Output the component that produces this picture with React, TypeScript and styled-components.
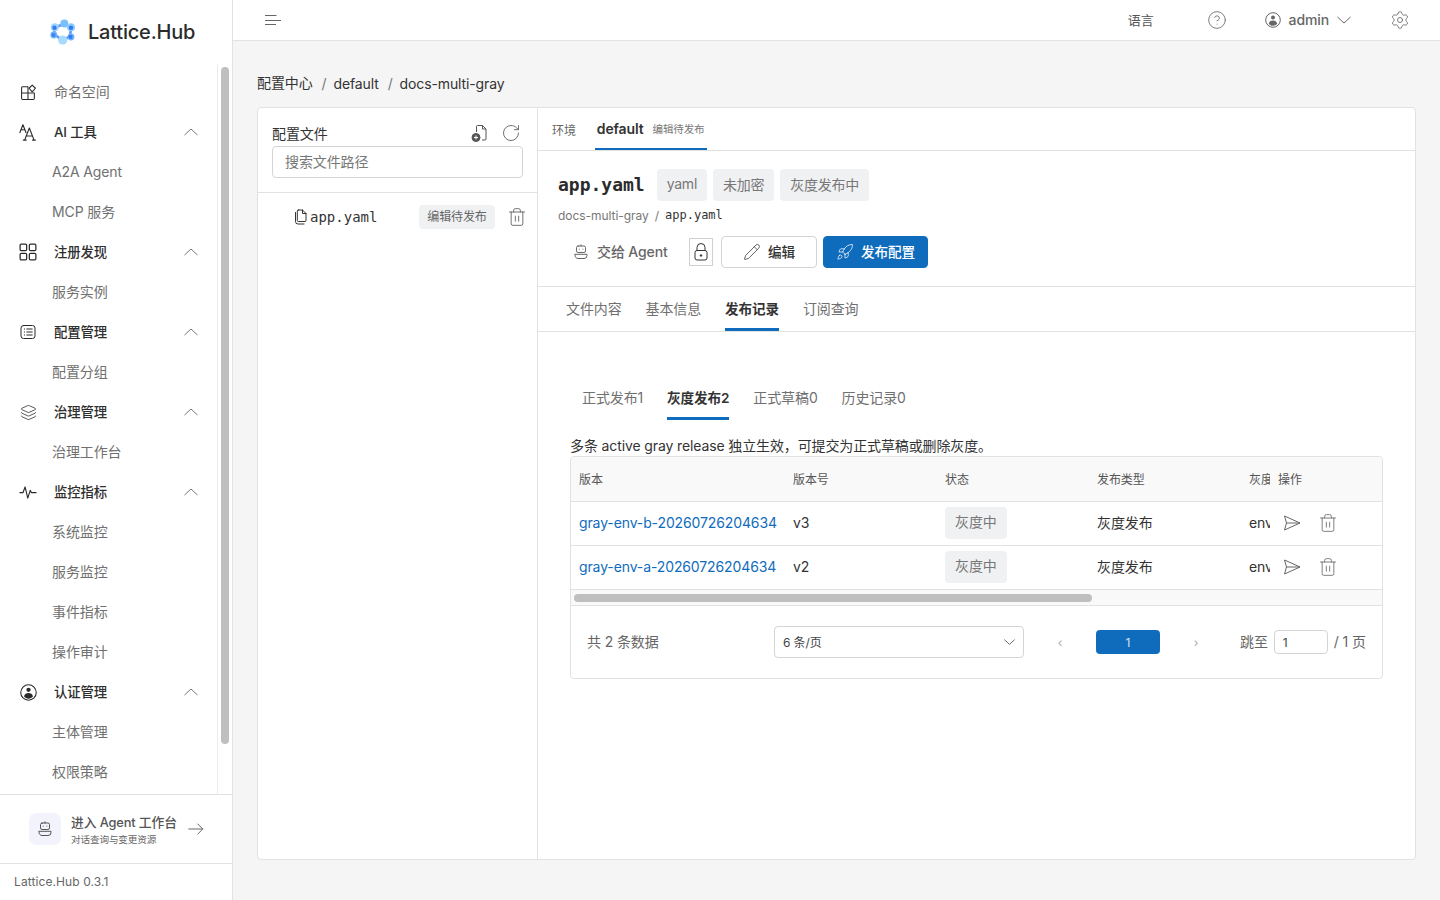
import React from "react";
import styled, { createGlobalStyle } from "styled-components";
import { RotateCw, Settings, CircleHelp, Pencil, Rocket, Layers, Trash2 } from "lucide-react";

const SANS = `Inter, "Noto Sans CJK SC", sans-serif`;
const MONO = `"DejaVu Sans Mono", "Noto Sans CJK SC", monospace`;
const BLUE = "#0f6cbd";
const LINE = "#e2e2e2";

const Global = createGlobalStyle`
  html, body { margin: 0; padding: 0; height: 100%; overflow: hidden; }
  body { font-family: ${SANS}; font-size: 14px; color: #333; background: #f5f5f5; letter-spacing: -0.12px; }
  * { box-sizing: border-box; }
  svg { flex: none; }
`;

const Shell = styled.div`display: flex; height: 900px; width: 1440px;`;
const Sidebar = styled.aside`
  width: 233px; flex: none; display: flex; flex-direction: column; background: #fff; border-right: 1px solid ${LINE};
`;
const Brand = styled.div`height: 64px; flex: none; display: flex; align-items: center; padding-left: 50px; gap: 12px;`;
const BrandName = styled.span`font-size: 20px; font-weight: 500; color: #2b2b2b; letter-spacing: -0.2px;`;
const NavArea = styled.div`flex: 1; min-height: 0; display: flex;`;
const Nav = styled.nav`flex: 1; min-width: 0; overflow: hidden; padding-top: 8px;`;
const NavRail = styled.div`width: 15px; flex: none; border-left: 1px solid #ececec; padding: 3px 0 0 3px;`;
const NavThumb = styled.div`width: 8px; height: 677px; border-radius: 4px; background: #bfbfbf;`;
const NavRow = styled.div<{ $top?: boolean; $strong?: boolean }>`
  height: 40px; display: flex; align-items: center;
  font-size: ${(p) => (p.$strong ? "13.4px" : "14px")};
  padding-left: ${(p) => (p.$top ? "20px" : "52px")};
  color: ${(p) => (p.$strong ? "#2e2e2e" : "#707070")};
  font-weight: ${(p) => (p.$strong ? 500 : 400)};
`;
const NavLabel = styled.span`margin-bottom: 2px;`;
const NavIcon = styled.span`width: 16px; height: 16px; margin-right: 18px; display: flex; align-items: center; justify-content: center; color: #2a2a2a;`;
const NavCaret = styled.span`margin-left: auto; margin-right: 19px; display: flex; color: #777;`;
const AgentEntry = styled.div`
  height: 70px; flex: none; border-top: 1px solid ${LINE}; border-bottom: 1px solid ${LINE};
  display: flex; align-items: center; padding-left: 29px;
`;
const AgentBadge = styled.span`width: 32px; height: 32px; border-radius: 7px; background: #f3f3fd; display: flex; align-items: center; justify-content: center; color: #555; margin-right: 10px;`;
const AgentText = styled.div`display: flex; flex-direction: column; width: 117px; padding-top: 3px;`;
const AgentTitle = styled.span`font-size: 12.8px; line-height: 17px; color: #555; font-weight: 500;`;
const AgentSub = styled.span`font-size: 9.6px; line-height: 14px; margin-top: 2px; color: #666;`;
const Version = styled.div`height: 36px; flex: none; display: flex; align-items: center; padding: 0 0 1px 14px; font-size: 12px; color: #666; letter-spacing: 0.1px;`;

const Main = styled.div`flex: 1; min-width: 0; display: flex; flex-direction: column;`;
const TopBar = styled.header`
  height: 41px; flex: none; background: #fff; border-bottom: 1px solid ${LINE};
  display: flex; align-items: center; padding-left: 32px; color: #666;
`;
const TopGroup = styled.div`margin-left: auto; display: flex; align-items: center; padding-right: 30px;`;
const LangLabel = styled.span`font-size: 13px; color: #555; margin-right: 53px; padding-bottom: 1px;`;
const AdminLabel = styled.span`font-size: 14px; font-weight: 500; color: #666; margin: 0 8px 0 8px; padding-bottom: 2px;`;
const TopGapA = styled.span`width: 38px;`;
const TopGapB = styled.span`width: 39px;`;
const Content = styled.main`flex: 1; min-height: 0; display: flex; flex-direction: column; padding: 0 24px 40px;`;
const Crumbs = styled.div`height: 66px; flex: none; display: flex; align-items: flex-end; padding-bottom: 15px; gap: 9px; font-size: 14px; color: #333;`;
const CrumbSep = styled.span`color: #777; margin-right: -2px;`;
const Card = styled.section`flex: 1; min-height: 0; display: flex; background: #fff; border: 1px solid ${LINE}; border-radius: 4px;`;

const FilePane = styled.div`width: 280px; flex: none; border-right: 1px solid ${LINE};`;
const FileHead = styled.div`padding: 13px 14px 14px; border-bottom: 1px solid ${LINE};`;
const FileTitleRow = styled.div`height: 24px; margin-bottom: 1px; display: flex; align-items: center; font-size: 14px; color: #333;`;
const FileTools = styled.span`margin-left: auto; margin-right: 2px; display: flex; align-items: center; gap: 12px; color: #555;`;
const SearchBox = styled.div`height: 32px; border: 1px solid #d4d4d4; border-radius: 4px; padding: 0 0 2px 12px; display: flex; align-items: center; font-size: 14px; color: #777;`;
const FileRow = styled.div`height: 47px; display: flex; align-items: center; padding-left: 35px; color: #333;`;
const FileName = styled.span`font-family: ${MONO}; font-size: 14px; margin-left: 1px; width: 109px; letter-spacing: 0;`;
const SmallTag = styled.span`height: 24px; width: 76px; border-radius: 4px; background: #f0f1f3; color: #666; font-size: 12px; display: flex; align-items: center; justify-content: center; margin-right: 12px; padding-bottom: 2px;`;

const Detail = styled.div`flex: 1; min-width: 0; display: flex; flex-direction: column;`;
const EnvBar = styled.div`height: 43px; flex: none; display: flex; padding-left: 14px; border-bottom: 1px solid ${LINE};`;
const EnvLabel = styled.span`font-size: 12px; color: #666; line-height: 46px; margin-right: 19px;`;
const EnvTab = styled.div`width: 112px; height: 42px; padding-left: 2px; display: flex; align-items: center; gap: 9px; border-bottom: 2px solid ${BLUE};`;
const EnvName = styled.span`font-size: 14px; font-weight: 600; color: #333;`;
const EnvHint = styled.span`font-size: 10.5px; color: #777;`;
const FileInfo = styled.div`height: 136px; flex: none; border-bottom: 1px solid ${LINE}; padding: 18px 20px 0;`;
const TitleRow = styled.div`display: flex; align-items: center; gap: 6px; height: 32px;`;
const FileTitle = styled.h1`font-family: ${MONO}; font-size: 18px; font-weight: 700; margin: 0 6px 2px 0; color: #2b2b2b; letter-spacing: 0;`;
const Tag = styled.span`height: 32px; padding: 0 10px 3px; border-radius: 4px; background: #f0f1f3; color: #777; font-size: 14px; letter-spacing: -0.25px; display: flex; align-items: center;`;
const PathRow = styled.div`height: 20px; margin-top: 4px; display: flex; align-items: center; font-size: 12px; color: #777; gap: 6px; letter-spacing: -0.05px;`;
const PathFile = styled.span`font-family: ${MONO}; color: #333; letter-spacing: 0;`;
const Actions = styled.div`display: flex; align-items: center; margin-top: 11px; height: 32px;`;
const GhostAction = styled.div`display: flex; align-items: center; padding-left: 15px; gap: 8px; width: 131px; color: #666; font-weight: 500; font-size: 14px;`;
const GhostText = styled.span`padding-bottom: 2px;`;
const LockBox = styled.div`width: 24px; height: 28px; border: 1px solid #d0d0d0; display: flex; align-items: center; justify-content: center; color: #333; margin-right: 8px;`;
const Button = styled.button<{ $primary?: boolean; $w: number }>`
  width: ${(p) => p.$w}px; height: 32px; border-radius: 4px; font: 500 13.6px ${SANS}; letter-spacing: inherit; display: flex; align-items: center; justify-content: center; gap: 7px; margin-right: 6px; padding: 0;
  border: 1px solid ${(p) => (p.$primary ? BLUE : "#d4d4d4")};
  background: ${(p) => (p.$primary ? BLUE : "#fff")};
  color: ${(p) => (p.$primary ? "#fff" : "#333")};
`;
const ButtonText = styled.span`padding-bottom: 2px;`;
const Tabs = styled.div`height: 45px; flex: none; display: flex; gap: 24px; padding-left: 28px; border-bottom: 1px solid ${LINE};`;
const TabItem = styled.div<{ $on?: boolean }>`
  height: 44px; line-height: 44px;
  font-size: ${(p) => (p.$on ? "13.6px" : "14px")};
  color: ${(p) => (p.$on ? "#333" : "#707070")}; font-weight: ${(p) => (p.$on ? 600 : 400)};
  border-bottom: 3px solid ${(p) => (p.$on ? BLUE : "transparent")};
`;
const Body = styled.div`flex: 1; min-height: 0; padding: 44px 32px 0;`;
const SubTabs = styled.div`display: flex; gap: 24px; padding-left: 12px; height: 44px; margin-bottom: 17px;`;
const SubTab = styled.div<{ $on?: boolean }>`
  line-height: 44px; height: 44px;
  font-size: ${(p) => (p.$on ? "13.6px" : "14px")};
  color: ${(p) => (p.$on ? "#333" : "#707070")}; font-weight: ${(p) => (p.$on ? 600 : 400)};
  border-bottom: 3px solid ${(p) => (p.$on ? BLUE : "transparent")};
`;
const Note = styled.div`font-size: 14px; line-height: 17px; height: 19px; color: #333; white-space: nowrap;`;
const TableBox = styled.div`border: 1px solid ${LINE}; border-radius: 4px; width: 813px; overflow: hidden;`;
const Scroller = styled.div`overflow: hidden;`;
const Table = styled.table`width: 1255px; table-layout: fixed; border-collapse: separate; border-spacing: 0;`;
const Th = styled.th<{ $w: number; $sticky?: boolean }>`
  width: ${(p) => p.$w}px; height: 45px; padding: 0 8px 1px; text-align: left; font-size: 12px; font-weight: 400; color: #555; background: #f9f9f9; border-bottom: 1px solid ${LINE}; white-space: nowrap; overflow: hidden;
  ${(p) => p.$sticky && "position: sticky; right: 0; z-index: 1;"}
`;
const Td = styled.td<{ $sticky?: boolean }>`
  height: 44px; padding: 0 8px 3px; font-size: 14px; color: #333; background: #fff; border-bottom: 1px solid ${LINE}; white-space: nowrap; overflow: hidden;
  ${(p) => p.$sticky && "position: sticky; right: 0; z-index: 1;"}
`;
const VersionLink = styled.span`color: ${BLUE};`;
const RowTag = styled.span`display: inline-flex; align-items: center; height: 32px; margin-top: 2px; padding: 0 10px 5px; border-radius: 4px; background: #f0f1f3; color: #777; font-size: 14px; vertical-align: middle;`;
const RowActions = styled.div`display: flex; align-items: center; gap: 17px; padding-left: 5px; margin-top: 2px; color: #666;`;
const TableRail = styled.div`height: 16px; background: #f9f9f9; border-bottom: 1px solid ${LINE}; padding: 4px 3px 0;`;
const TableThumb = styled.div`width: 518px; height: 8px; border-radius: 4px; background: #bfbfbf;`;
const Pager = styled.div`height: 72px; display: flex; align-items: center; padding: 0 16px; font-size: 14px; color: #666; white-space: nowrap;`;
const Total = styled.span`width: 187px; padding-bottom: 2px;`;
const PageSize = styled.div`width: 250px; height: 32px; border: 1px solid #d4d4d4; border-radius: 4px; display: flex; align-items: center; justify-content: space-between; padding: 0 8px; font-size: 12px; color: #444;`;
const PageSizeText = styled.span`padding-bottom: 2px;`;
const PageArrow = styled.span`width: 72px; text-align: center; font-size: 12px; color: #aaa;`;
const PageNow = styled.span`width: 64px; height: 24px; background: ${BLUE}; border-radius: 4px; color: #cfe3f5; font-size: 12px; display: flex; align-items: center; justify-content: center;`;
const JumpLabel = styled.span`margin-left: 8px; margin-right: 6px; padding-bottom: 2px;`;
const JumpInput = styled.div`width: 54px; height: 24px; border: 1px solid #d4d4d4; border-radius: 4px; padding-left: 8px; font-size: 12px; color: #444; display: flex; align-items: center; margin-right: 6px;`;
const PageCount = styled.span`padding-bottom: 2px;`;

const Svg = ({ s = 16, w = 1, children }: { s?: number; w?: number; children: React.ReactNode }) => (
  <svg width={s} height={s} viewBox="0 0 16 16" fill="none" stroke="currentColor" strokeWidth={w} strokeLinecap="round" strokeLinejoin="round">{children}</svg>
);
const CaretUp = () => <svg width="14" height="8" viewBox="0 0 14 8" fill="none" stroke="currentColor"><path d="M.5 7 7 1l6.5 6" /></svg>;
const CaretDown = ({ w = 14 }: { w?: number }) => <svg width={w} height="8" viewBox="0 0 14 8" fill="none" stroke="currentColor"><path d="M.5 1 7 7l6.500-6" /></svg>;
const Logo = () => (
  <svg width="26" height="26" viewBox="0 0 26 26">
    <path d="M14 5 21 9.500 20 17.500 12.500 21.500 4 15 5 8.500Z" fill="none" stroke="#5b9df5" strokeWidth="2.600" />
    <circle cx="14.300" cy="4.500" r="4" fill="#7cc0fb" />
    <circle cx="4.800" cy="8.200" r="4" fill="#9fd4fd" />
    <circle cx="21" cy="8.200" r="4" fill="#8ecbfc" />
    <circle cx="12.700" cy="21" r="4.600" fill="#a6daff" />
    <circle cx="3.800" cy="16" r="3.400" fill="#6fb2f8" />
    <circle cx="21" cy="18" r="3.400" fill="#6fb2f8" />
    <circle cx="4.500" cy="8.700" r="2.200" fill="#2f7bf0" />
    <circle cx="21" cy="8.700" r="2.200" fill="#2f7bf0" />
    <circle cx="3.500" cy="16" r="2.100" fill="#3b84f2" />
    <circle cx="20.500" cy="17.800" r="2.100" fill="#2f7bf0" />
  </svg>
);
const NsIcon = () => <Svg s={17}><path d="M7.500 2.500H2.500a1 1 0 0 0-1 1v10a1 1 0 0 0 1 1h10a1 1 0 0 0 1-1V8.500H1.500M7.500 2.500v12" /><path d="m11.500 1 3 3-3 3.500-3-3.500z" /></Svg>;
const AiIcon = () => <Svg s={18}><path d="M.8 8.500 3.500 1.500 6.200 8.500M1.800 6h3.400M5 15.200 9.200 4.500l4.200 10.700M6.600 11.500h5.200M3.800 15.200h2.600M12 15.200h2.600" /></Svg>;
const GridIcon = () => <Svg s={18} w={1.1}><rect x="1" y="1" width="5.800" height="5.800" rx="1" /><rect x="9.200" y="1" width="5.800" height="5.800" rx="1" /><rect x="1" y="9.200" width="5.800" height="5.800" rx="1" /><rect x="9.200" y="9.200" width="5.800" height="5.800" rx="1" /></Svg>;
const ListIcon = () => <Svg><rect x="1" y="1.500" width="14" height="13" rx="2.500" /><path d="M4.300 5h.3M4.300 8h.3M4.300 11h.3M6.800 5h5.400M6.800 8h5.400M6.800 11h5.400" /></Svg>;
const PulseIcon = () => <Svg s={18}><path d="M.8 8.500h2.800l1.800-5 2.400 10 2.200-7 1 2h4.200" /></Svg>;
const UserIcon = ({ s = 16 }: { s?: number }) => (
  <svg width={s} height={s} viewBox="0 0 16 16"><circle cx="8" cy="8" r="7.300" fill="none" stroke="currentColor" strokeWidth="1" /><circle cx="8" cy="5.500" r="2" fill="currentColor" /><path d="M3.800 11.800c.5-2.500 2.200-3.300 4.200-3.300s3.700.8 4.200 3.300c-1 1.200-2.500 2-4.200 2s-3.200-.8-4.200-2z" fill="currentColor" /></svg>
);
const RobotIcon = () => (
  <Svg s={16}><rect x="3.500" y="2" width="9" height="6.500" rx="1.600" /><path d="M8 .8V2M6.200 5.200h.1M9.800 5.200h.1M2 10.300h12v.9A3 3 0 0 1 11 14.500H5a3 3 0 0 1-3-3.300z" /></Svg>
);
const MenuIcon = () => <svg width="16" height="10" viewBox="0 0 16 10" stroke="#666" strokeWidth="1"><path d="M0 .5h11.500M0 5.500h16M0 9.500h11" /></svg>;
const FileAddIcon = () => (
  <svg width="18" height="18" viewBox="0 0 18 18" fill="none" stroke="currentColor"><path d="M5.500 8V2.500a1 1 0 0 1 1-1h5l3.500 3.500v10a1 1 0 0 1-1 1h-3" /><path d="M11.500 1.500V5H15" /><circle cx="5" cy="13.500" r="4" fill="currentColor" /><path d="M3 13.500h4M5 11.500v4" stroke="#fff" /></svg>
);
const FilesIcon = () => <Svg s={16}><path d="M2.500 3.500v9a2.500 2.500 0 0 0 2.500 2.500h6" /><path d="M5.300 1h4.200l3.500 3.500v7a1 1 0 0 1-1 1H5.300a1 1 0 0 1-1-1V2a1 1 0 0 1 1-1z" /><path d="M9.500 1v3.500H13" /></Svg>;
const SendIcon = () => <svg width="18" height="16" viewBox="0 0 18 16" fill="none" stroke="currentColor" strokeLinejoin="round"><path d="M1.500 1 17 8 1.500 15 3.500 8zM3.500 8H17" /></svg>;
const LockIcon = () => <svg width="14" height="18" viewBox="0 0 14 18" fill="none" stroke="currentColor"><path d="M3 7.500V4.500a4 4 0 0 1 8 0v3" /><rect x="1" y="7.500" width="12" height="9.500" rx="2" /><circle cx="7" cy="12.500" r=".8" fill="currentColor" /></svg>;
const ArrowIcon = () => <svg width="16" height="12" viewBox="0 0 16 12" fill="none" stroke="#666" strokeLinecap="round" strokeLinejoin="round"><path d="M.8 6h14M9.800 1l5 5-5 5" /></svg>;

const nav: { t: string; icon?: React.ReactNode; strong?: boolean }[] = [
  { t: "命名空间", icon: <NsIcon /> },
  { t: "AI 工具", icon: <AiIcon />, strong: true },
  { t: "A2A Agent" }, { t: "MCP 服务" },
  { t: "注册发现", icon: <GridIcon />, strong: true },
  { t: "服务实例" },
  { t: "配置管理", icon: <ListIcon />, strong: true },
  { t: "配置分组" },
  { t: "治理管理", icon: <Layers size={17} strokeWidth={1.1} />, strong: true },
  { t: "治理工作台" },
  { t: "监控指标", icon: <PulseIcon />, strong: true },
  { t: "系统监控" }, { t: "服务监控" }, { t: "事件指标" }, { t: "操作审计" },
  { t: "认证管理", icon: <UserIcon s={17} />, strong: true },
  { t: "主体管理" }, { t: "权限策略" },
];
const rows = [
  { v: "gray-env-b-20260726204634", n: "v3" },
  { v: "gray-env-a-20260726204634", n: "v2" },
];

export default function App() {
  return (
    <Shell>
      <Global />
      <Sidebar>
        <Brand><Logo /><BrandName>Lattice.Hub</BrandName></Brand>
        <NavArea>
          <Nav>
            {nav.map((n) => (
              <NavRow key={n.t} $top={!!n.icon} $strong={n.strong}>
                {n.icon && <NavIcon>{n.icon}</NavIcon>}
                <NavLabel>{n.t}</NavLabel>
                {n.strong && <NavCaret><CaretUp /></NavCaret>}
              </NavRow>
            ))}
          </Nav>
          <NavRail><NavThumb /></NavRail>
        </NavArea>
        <AgentEntry>
          <AgentBadge><RobotIcon /></AgentBadge>
          <AgentText>
            <AgentTitle>进入 Agent 工作台</AgentTitle>
            <AgentSub>对话查询与变更资源</AgentSub>
          </AgentText>
          <ArrowIcon />
        </AgentEntry>
        <Version>Lattice.Hub 0.3.1</Version>
      </Sidebar>
      <Main>
        <TopBar>
          <MenuIcon />
          <TopGroup>
            <LangLabel>语言</LangLabel>
            <CircleHelp size={20} strokeWidth={1} />
            <TopGapA />
            <UserIcon />
            <AdminLabel>admin</AdminLabel>
            <CaretDown />
            <TopGapB />
            <Settings size={20} strokeWidth={1} />
          </TopGroup>
        </TopBar>
        <Content>
          <Crumbs>
            <span>配置中心</span><CrumbSep>/</CrumbSep><span>default</span><CrumbSep>/</CrumbSep><span>docs-multi-gray</span>
          </Crumbs>
          <Card>
            <FilePane>
              <FileHead>
                <FileTitleRow>
                  配置文件
                  <FileTools><FileAddIcon /><RotateCw size={20} strokeWidth={1} /></FileTools>
                </FileTitleRow>
                <SearchBox>搜索文件路径</SearchBox>
              </FileHead>
              <FileRow>
                <FilesIcon />
                <FileName>app.yaml</FileName>
                <SmallTag>编辑待发布</SmallTag>
                <Trash2 size={20} strokeWidth={1} color="#555" />
              </FileRow>
            </FilePane>
            <Detail>
              <EnvBar>
                <EnvLabel>环境</EnvLabel>
                <EnvTab><EnvName>default</EnvName><EnvHint>编辑待发布</EnvHint></EnvTab>
              </EnvBar>
              <FileInfo>
                <TitleRow>
                  <FileTitle>app.yaml</FileTitle>
                  <Tag>yaml</Tag><Tag>未加密</Tag><Tag>灰度发布中</Tag>
                </TitleRow>
                <PathRow><span>docs-multi-gray</span><span>/</span><PathFile>app.yaml</PathFile></PathRow>
                <Actions>
                  <GhostAction><RobotIcon /><GhostText>交给 Agent</GhostText></GhostAction>
                  <LockBox><LockIcon /></LockBox>
                  <Button $w={96}><Pencil size={18} strokeWidth={1} /><ButtonText>编辑</ButtonText></Button>
                  <Button $w={105} $primary><Rocket size={18} strokeWidth={1} /><ButtonText>发布配置</ButtonText></Button>
                </Actions>
              </FileInfo>
              <Tabs>
                <TabItem>文件内容</TabItem><TabItem>基本信息</TabItem><TabItem $on>发布记录</TabItem><TabItem>订阅查询</TabItem>
              </Tabs>
              <Body>
                <SubTabs>
                  <SubTab>正式发布1</SubTab><SubTab $on>灰度发布2</SubTab><SubTab>正式草稿0</SubTab><SubTab>历史记录0</SubTab>
                </SubTabs>
                <Note>多条 active gray release 独立生效，可提交为正式草稿或删除灰度。</Note>
                <TableBox>
                  <Scroller>
                    <Table>
                      <thead>
                        <tr>
                          <Th $w={214}>版本</Th><Th $w={152}>版本号</Th><Th $w={152}>状态</Th><Th $w={152}>发布类型</Th><Th $w={473}>灰度规则</Th><Th $w={112} $sticky>操作</Th>
                        </tr>
                      </thead>
                      <tbody>
                        {rows.map((r) => (
                          <tr key={r.n}>
                            <Td><VersionLink>{r.v}</VersionLink></Td>
                            <Td>{r.n}</Td>
                            <Td><RowTag>灰度中</RowTag></Td>
                            <Td>灰度发布</Td>
                            <Td>env=gray</Td>
                            <Td $sticky><RowActions><SendIcon /><Trash2 size={20} strokeWidth={1} /></RowActions></Td>
                          </tr>
                        ))}
                      </tbody>
                    </Table>
                  </Scroller>
                  <TableRail><TableThumb /></TableRail>
                  <Pager>
                    <Total>共 2 条数据</Total>
                    <PageSize><PageSizeText>6 条/页</PageSizeText><CaretDown w={11} /></PageSize>
                    <PageArrow>‹</PageArrow>
                    <PageNow>1</PageNow>
                    <PageArrow>›</PageArrow>
                    <JumpLabel>跳至</JumpLabel>
                    <JumpInput>1</JumpInput>
                    <PageCount>/ 1 页</PageCount>
                  </Pager>
                </TableBox>
              </Body>
            </Detail>
          </Card>
        </Content>
      </Main>
    </Shell>
  );
}
